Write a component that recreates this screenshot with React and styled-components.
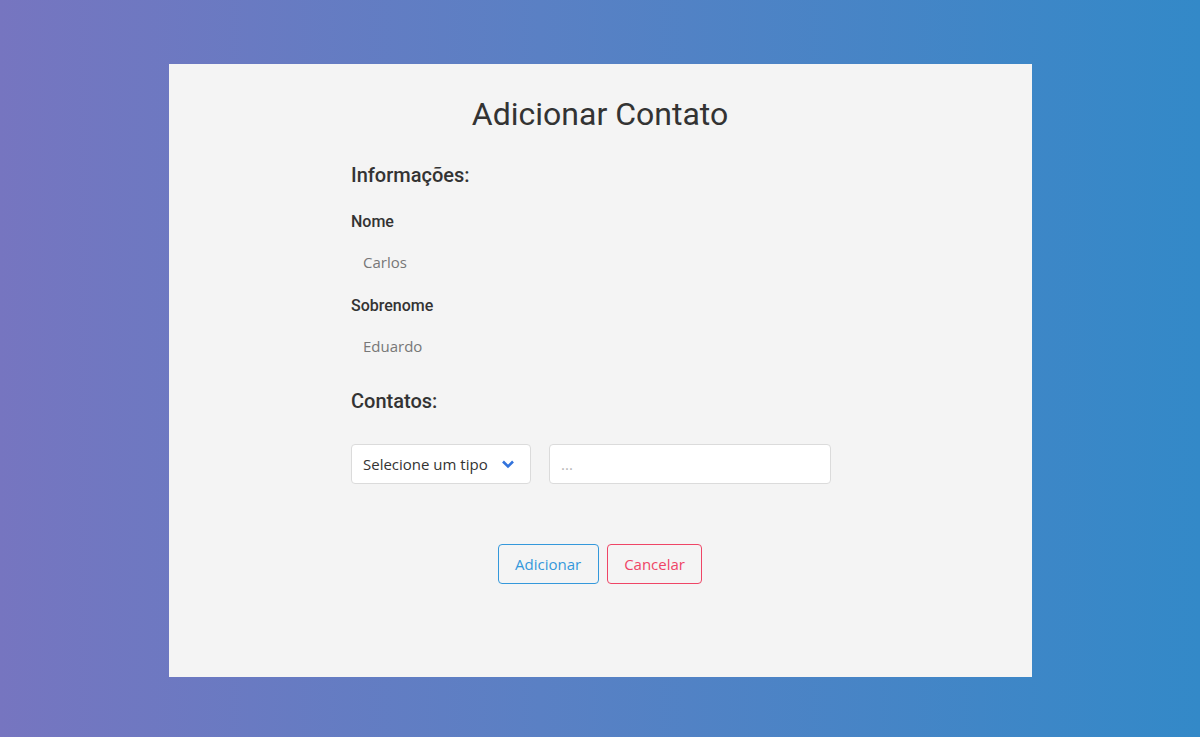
import styled, { createGlobalStyle } from "styled-components";

const GlobalStyle = createGlobalStyle`
  html, body { margin: 0; padding: 0; }
  body {
    width: 1200px;
    height: 737px;
    overflow: hidden;
    background: linear-gradient(90deg, #7675c0 0%, #5a80c4 45%, #3389c8 100%);
    font-family: "Open Sans", "Noto Sans", sans-serif;
    color: #333;
  }
`;

const Page = styled.div`
  display: flex;
  justify-content: center;
  padding-top: 64px;
  height: 737px;
  box-sizing: border-box;
`;

const Card = styled.div`
  width: 863px;
  height: 613px;
  background: #f4f4f4;
  display: flex;
  flex-direction: column;
  align-items: center;
  padding-top: 31px;
  box-sizing: border-box;
`;

const Title = styled.h1`
  margin: 0;
  font-family: Roboto, "Liberation Sans", sans-serif;
  font-weight: 400;
  font-size: 32px;
  line-height: 38px;
  color: #333;
`;

const Form = styled.div`
  width: 498px;
  display: flex;
  flex-direction: column;
  margin-top: 30px;
`;

const Section = styled.h2`
  margin: 0;
  font-family: Roboto, "Liberation Sans", sans-serif;
  font-weight: 500;
  font-size: 20px;
  line-height: 24px;
  color: #333;
  margin-top: ${(p) => p.$top || 0}px;
`;

const Label = styled.label`
  display: block;
  font-family: Roboto, "Liberation Sans", sans-serif;
  font-weight: 500;
  font-size: 16px;
  line-height: 20px;
  color: #333;
  margin-top: ${(p) => p.$top || 0}px;
`;

const PlainInput = styled.input`
  display: block;
  width: 100%;
  height: 40px;
  box-sizing: border-box;
  margin-top: 10px;
  padding: 0 12px;
  border: none;
  background: transparent;
  font-family: "Open Sans", "Noto Sans", sans-serif;
  font-size: 15px;
  color: #777;
  outline: none;
`;

const Row = styled.div`
  display: flex;
  gap: 18px;
  margin-top: 31px;
`;

const SelectBox = styled.div`
  width: 180px;
  height: 40px;
  box-sizing: border-box;
  border: 1px solid #dbdbdb;
  border-radius: 4px;
  background: #fff;
  display: flex;
  align-items: center;
  justify-content: space-between;
  padding: 0 15px 0 11px;
  font-size: 15px;
  color: #333;
`;

const FieldInput = styled.input`
  width: 282px;
  height: 40px;
  box-sizing: border-box;
  border: 1px solid #dbdbdb;
  border-radius: 4px;
  background: #fff;
  padding: 0 11px;
  font-family: "Open Sans", "Noto Sans", sans-serif;
  font-size: 15px;
  outline: none;
  &::placeholder { color: #b5b5b5; }
`;

const Actions = styled.div`
  display: flex;
  justify-content: center;
  gap: 8px;
  margin-top: 60px;
`;

const Button = styled.button`
  height: 40px;
  box-sizing: border-box;
  padding: 0 16.5px;
  border-radius: 4px;
  background: transparent;
  border: 1px solid ${(p) => p.$color};
  color: ${(p) => p.$color};
  font-family: "Open Sans", "Noto Sans", sans-serif;
  font-size: 15px;
  cursor: pointer;
`;

export default function App() {
  return (
    <>
      <GlobalStyle />
      <Page>
        <Card>
          <Title>Adicionar Contato</Title>
          <Form>
            <Section>Informações:</Section>
            <Label $top={25}>Nome</Label>
            <PlainInput defaultValue="Carlos" />
            <Label $top={14}>Sobrenome</Label>
            <PlainInput defaultValue="Eduardo" />
            <Section $top={23}>Contatos:</Section>
            <Row>
              <SelectBox>
                <span>Selecione um tipo</span>
                <svg width="14" height="10" viewBox="0 0 14 10">
                  <path d="M2 2.5 L7 7.5 L12 2.5" fill="none" stroke="#3273dc" strokeWidth="2.6" />
                </svg>
              </SelectBox>
              <FieldInput placeholder="..." />
            </Row>
          </Form>
          <Actions>
            <Button $color="#3498db">Adicionar</Button>
            <Button $color="#ef4566">Cancelar</Button>
          </Actions>
        </Card>
      </Page>
    </>
  );
}
